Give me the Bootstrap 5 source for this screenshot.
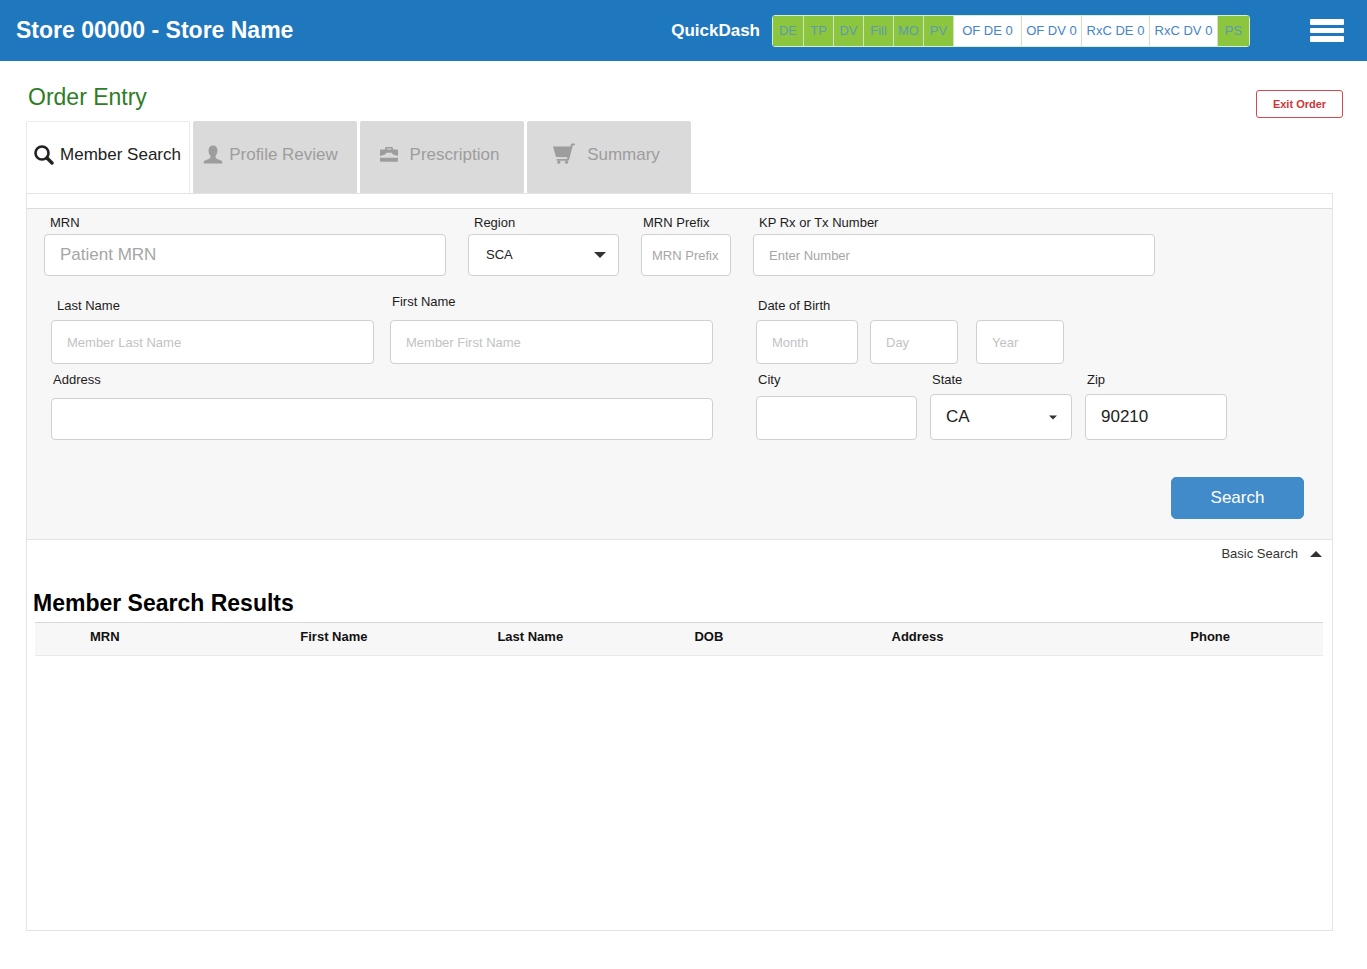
<!DOCTYPE html>
<html lang="en">
<head>
<meta charset="utf-8">
<meta name="viewport" content="width=device-width, initial-scale=1">
<title>Order Entry - Member Search</title>
<link rel="stylesheet" href="https://cdn.jsdelivr.net/npm/bootstrap@5.3.0/dist/css/bootstrap.min.css">
<style>
  body { font-family: "Liberation Sans", Arial, sans-serif; font-size: 13px; line-height: 20px; color: #222; background: #fff; }

  /* Top bar */
  .topbar { height: 61px; background: #1f77be; padding: 0 23px 0 16px; }
  .store-title { font-size: 23px; line-height: 28px; padding-bottom: 2px; }
  .quick-title { font-size: 17px; margin-right: 12px; }
  .quick-list { height: 32px; border: 1px solid #d9efc4; border-radius: 3px; overflow: hidden; }
  .quick-list li { width: 30px; }
  .quick-list li + li { border-left: 1px solid #cfe3bd; }
  .quick-list .q-end { width: 32px; }
  .quick-list .q-mid { width: 60px; }
  .quick-list .q-wide { width: 68px; }
  .quick-list a { height: 30px; background: #8cc63f; color: #5c9cae; text-decoration: none; white-space: nowrap; }
  .quick-list .q-mid a, .quick-list .q-wide a { background: #fff; color: #4585c6; }
  .menu-btn { margin-left: 60px; }

  /* Heading row */
  .page-head { padding: 0 24px 0 28px; height: 60px; }
  .page-title { font-size: 23px; line-height: 28px; color: #2f7d26; padding-top: 22px; }
  .exit-btn { width: 87px; height: 28px; margin-top: 29px; font-size: 11px; line-height: 16px; --bs-btn-padding-x: 0; --bs-btn-padding-y: 0; --bs-btn-color: #d13438; --bs-btn-border-color: #d4494d; --bs-btn-border-radius: 3px; }

  /* Step tabs */
  .content { padding: 0 34px 38px 26px; }
  .steps { gap: 3px; border: 0; }
  .steps .nav-link { width: 164px; height: 72px; padding: 0 5px 5px 0; border: 1px solid #dadada; border-radius: 2px 2px 0 0; background: #dadada; color: #9d9d9d; font-size: 17px; gap: 12px; margin: 0; }
  .steps .nav-link.near { gap: 6px; padding-right: 9px; }
  .steps .nav-link.active { background: #fff; color: #222; border-color: #e8ecec; border-bottom: 0; padding-right: 1px; }

  /* Panel and search form */
  .panel { border: 1px solid #e2e4e4; padding-top: 14px; }
  .search-form { background: #f7f7f7; border-top: 1px solid #dcdcdc; border-bottom: 1px solid #e4e4e4; padding: 4px 0 20px 17px; }
  .grid-top, .grid-main, .grid-names, .grid-dob, .grid-city { display: grid; align-items: end; }
  .grid-top { grid-template-columns: 402fr 151fr 90fr 402fr 155fr; column-gap: 22px; --lead: 1px; }
  .grid-main { grid-template-columns: 662fr 471fr 62fr; column-gap: 43px; padding-left: 7px; }
  .grid-names { grid-template-columns: 1fr 1fr; column-gap: 16px; }
  .grid-dob { grid-template-columns: 102fr 88fr 94fr 151fr; column-gap: 12px; }
  .grid-city { grid-template-columns: 161fr 142fr 142fr; column-gap: 13px; }
  .gap-names { margin-top: 16px; }
  .gap-address { margin-top: 6px; }
  .year-cell { padding-left: 6px; }
  .field-label { display: block; line-height: 20px; margin-bottom: var(--lead, 4px); padding-left: 2px; white-space: nowrap; color: #1c1c1c; }
  .field-label.inset { padding-left: 6px; }
  .loose { --lead: 8px; }
  .medium { --lead: 6px; }
  .field { height: 42px; padding: 0 15px; border: 1px solid #cfd1d1; border-radius: 4px; font-size: 13px; line-height: 20px; color: #222; }
  .field::placeholder { color: #a6a6a6; }
  .field.pale::placeholder { color: #bfc3c3; }
  .field.slim { padding: 0 10px; }
  .field.tall { height: 44px; }
  .field.taller { height: 46px; }
  .field.big { font-size: 17px; }
  .field.form-select { background-image: url("data:image/svg+xml,%3Csvg xmlns='http://www.w3.org/2000/svg' viewBox='0 0 12 6'%3E%3Cpath fill='%23333' d='M0 0h12L6 6z'/%3E%3C/svg%3E"); background-size: 12px 6px; background-position: right 12px center; padding-left: 17px; }
  .field.form-select.big { background-size: 8px 5px; background-position: right 14px center; padding-left: 15px; }
  .search-btn { width: 133px; height: 42px; margin: 37px 28px 0 0; font-size: 17px; line-height: 20px; --bs-btn-bg: #428bca; --bs-btn-border-color: #428bca; --bs-btn-border-radius: 5px; }
  .basic-btn { font-size: 13px; line-height: 20px; color: #333; gap: 12px; margin: 4px 10px 0 0; }

  /* Results */
  .results { padding: 25px 9px 0 8px; }
  .results-title { font-size: 23px; line-height: 28px; color: #000; margin: 0 0 5px -2px; }
  .results-table { table-layout: fixed; margin: 0; border-top: 1px solid #d8d8d8; border-bottom: 1px solid #e9e9e9; }
  .results-table th { background: #f7f7f7; border: 0; padding: 4px 0 8px; color: #111; line-height: 20px; }
  .results-table th:first-child { width: 20.6%; padding-left: 55px; }
  .results-table th:nth-child(n+2) { width: 15.3%; }
  .results-table th:nth-child(5) { width: 23.2%; }
  .results-table th:nth-child(6) { width: 10.3%; }
</style>
</head>
<body class="d-flex flex-column min-vh-100">

<header class="topbar d-flex align-items-center text-white">
  <div class="store-title fw-bold me-auto">Store 00000 - Store Name</div>
  <div class="quick-title fw-bold">QuickDash</div>
  <ul class="quick-list d-flex list-unstyled m-0">
    <li><a class="d-flex align-items-center justify-content-center" href="#">DE</a></li>
    <li><a class="d-flex align-items-center justify-content-center" href="#">TP</a></li>
    <li><a class="d-flex align-items-center justify-content-center" href="#">DV</a></li>
    <li><a class="d-flex align-items-center justify-content-center" href="#">Fill</a></li>
    <li><a class="d-flex align-items-center justify-content-center" href="#">MO</a></li>
    <li><a class="d-flex align-items-center justify-content-center" href="#">PV</a></li>
    <li class="q-wide"><a class="d-flex align-items-center justify-content-center" href="#">OF DE 0</a></li>
    <li class="q-mid"><a class="d-flex align-items-center justify-content-center" href="#">OF DV 0</a></li>
    <li class="q-wide"><a class="d-flex align-items-center justify-content-center" href="#">RxC DE 0</a></li>
    <li class="q-wide"><a class="d-flex align-items-center justify-content-center" href="#">RxC DV 0</a></li>
    <li class="q-end"><a class="d-flex align-items-center justify-content-center" href="#">PS</a></li>
  </ul>
  <button class="menu-btn btn p-0 border-0 d-flex" type="button" aria-label="Menu">
    <svg width="34" height="23" viewBox="0 0 34 23" fill="#fff"><rect width="34" height="6" rx="1"/><rect y="9" width="34" height="5" rx="1"/><rect y="17" width="34" height="6" rx="1"/></svg>
  </button>
</header>

<div class="page-head d-flex justify-content-between align-items-start">
  <h1 class="page-title fw-normal m-0">Order Entry</h1>
  <button class="exit-btn btn btn-outline-danger fw-bold" type="button">Exit Order</button>
</div>

<main class="content d-flex flex-column flex-grow-1">
  <ul class="steps nav nav-tabs">
    <li class="nav-item"><a class="nav-link near active d-flex align-items-center justify-content-center" aria-current="page" href="#">
      <svg width="20" height="20" viewBox="0 0 20 20" fill="none" stroke="currentColor"><circle cx="8" cy="8" r="6.5" stroke-width="2.6"/><path d="M13 13l5 5" stroke-width="3.4" stroke-linecap="round"/></svg>
      Member Search</a></li>
    <li class="nav-item"><a class="nav-link near d-flex align-items-center justify-content-center" href="#">
      <svg width="20" height="20" viewBox="0 0 20 20" fill="currentColor"><path d="M10 0.500c2.900 0 4.500 2 4.500 5 0 2.100-.8 4-1.900 5.100v1.700c0 .7.4 1.100 1.100 1.400l4.300 1.800c.9.400 1.300 1 1.300 1.800v1.200H.7v-1.200c0-.8.4-1.400 1.300-1.800l4.300-1.800c.7-.3 1.100-.7 1.100-1.400v-1.700C6.300 9.500 5.500 7.600 5.500 5.500c0-3 1.600-5 4.500-5z"/></svg>
      Profile Review</a></li>
    <li class="nav-item"><a class="nav-link d-flex align-items-center justify-content-center" href="#">
      <svg width="18" height="18" viewBox="0 0 18 18" fill="currentColor"><path d="M0 10V4.500c0-.7.400-1 1-1h4V2.500C5 1.500 5.700 1 6.500 1h5c.8 0 1.500.5 1.500 1.500v1h4c.6 0 1 .3 1 1V10l-5-1.500-1.500-1.700h-5L5 8.500zM6.700 3.500h4.600v-1H6.700zM0 11.800h18v3c0 .6-.4 1-1 1H1c-.6 0-1-.4-1-1z"/></svg>
      Prescription</a></li>
    <li class="nav-item"><a class="nav-link d-flex align-items-center justify-content-center" href="#">
      <svg width="22" height="24" viewBox="0 0 22 24" fill="currentColor"><path d="M0 3.500h17.300l.7-2c.2-.7.600-1 1.200-1H21c.6 0 1 .4 1 .9s-.4.900-1 .900h-1.100l-3.800 14.200c-.2.800-.5 1.200-1.200 1.200H4.500c-.6 0-1-.4-1-.9s.4-.9 1-.9h9.600l.4-1.600L3 14z"/><circle cx="5.800" cy="19.200" r="1.600"/><circle cx="13.500" cy="19.200" r="1.600"/></svg>
      Summary</a></li>
  </ul>

  <section class="panel flex-grow-1">
    <form class="search-form" onsubmit="return false">
      <div class="grid-top">
        <div><label class="field-label inset" for="mrn">MRN</label><input class="field big form-control" id="mrn" type="text" placeholder="Patient MRN"></div>
        <div><label class="field-label inset" for="region">Region</label><select class="field form-select" id="region"><option>SCA</option></select></div>
        <div><label class="field-label" for="prefix">MRN Prefix</label><input class="field slim form-control" id="prefix" type="text" placeholder="MRN Prefix"></div>
        <div><label class="field-label inset" for="rx">KP Rx or Tx Number</label><input class="field form-control" id="rx" type="text" placeholder="Enter Number"></div>
      </div>

      <div class="grid-main gap-names">
        <div class="grid-names">
          <div><label class="field-label inset" for="last">Last Name</label><input class="field tall pale form-control" id="last" type="text" placeholder="Member Last Name"></div>
          <div class="loose"><label class="field-label" for="first">First Name</label><input class="field tall pale form-control" id="first" type="text" placeholder="Member First Name"></div>
        </div>
        <div class="grid-dob">
          <div><label class="field-label" for="month">Date of Birth</label><input class="field tall pale form-control" id="month" type="text" placeholder="Month"></div>
          <div><input class="field tall pale form-control" type="text" placeholder="Day" aria-label="Day of birth"></div>
          <div class="year-cell"><input class="field tall pale form-control" type="text" placeholder="Year" aria-label="Year of birth"></div>
        </div>
      </div>

      <div class="grid-main gap-address">
        <div class="loose"><label class="field-label" for="address">Address</label><input class="field form-control" id="address" type="text"></div>
        <div class="grid-city">
          <div class="medium"><label class="field-label" for="city">City</label><input class="field tall form-control" id="city" type="text"></div>
          <div><label class="field-label" for="state">State</label><select class="field taller big form-select" id="state"><option>CA</option></select></div>
          <div><label class="field-label" for="zip">Zip</label><input class="field taller big form-control" id="zip" type="text" value="90210"></div>
        </div>
      </div>

      <div class="d-flex justify-content-end">
        <button class="search-btn btn btn-primary" type="submit">Search</button>
      </div>
    </form>

    <div class="d-flex justify-content-end">
      <button class="basic-btn btn p-0 border-0 d-flex align-items-center" type="button">Basic Search
        <svg width="12" height="6" viewBox="0 0 12 6" fill="#333"><path d="M0 6h12L6 0z"/></svg>
      </button>
    </div>

    <div class="results">
      <h2 class="results-title fw-bold">Member Search Results</h2>
      <table class="results-table table">
        <thead><tr><th scope="col">MRN</th><th scope="col">First Name</th><th scope="col">Last Name</th><th scope="col">DOB</th><th scope="col">Address</th><th scope="col">Phone</th></tr></thead>
      </table>
    </div>
  </section>
</main>

<script src="https://cdn.jsdelivr.net/npm/bootstrap@5.3.0/dist/js/bootstrap.bundle.min.js"></script>
</body>
</html>
